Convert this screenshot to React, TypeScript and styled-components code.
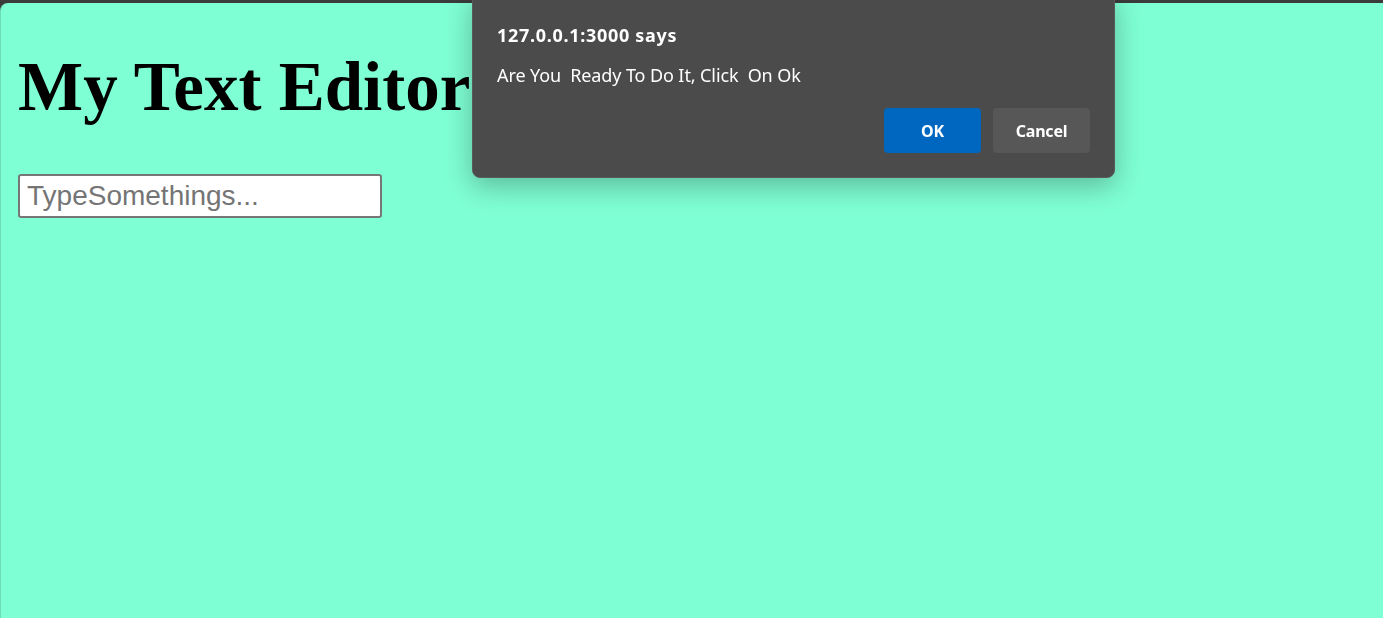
import React from "react";
import styled, { createGlobalStyle } from "styled-components";

const Global = createGlobalStyle`
  html, body { margin: 0; padding: 0; background: #3b3b3b; }
  body { height: 618px; overflow: hidden; }
`;

const Viewport = styled.div`
  margin-top: 3px;
  height: 615px;
  box-sizing: border-box;
  background: #7fffd4;
  border-top-left-radius: 8px;
  border-left: 1px solid #6cdcb6;
  padding: 0 0 0 17px;
  overflow: hidden;
`;

const Title = styled.h1`
  margin: 47px 0 49px;
  font-family: "Liberation Serif", "Times New Roman", serif;
  font-weight: bold;
  font-size: 69px;
  line-height: 75px;
  color: #000;
`;

const TextInput = styled.input`
  display: block;
  box-sizing: border-box;
  width: 364px;
  height: 44px;
  margin: 0;
  padding: 2px 7px;
  border: 2px solid #767676;
  border-radius: 3px;
  background: #fff;
  font-family: "Liberation Sans", Arial, sans-serif;
  font-size: 28px;
  color: #000;
  outline: none;
  &::placeholder { color: #757575; }
`;

const Dialog = styled.div`
  position: fixed;
  left: 472px;
  top: -8px;
  width: 643px;
  height: 186px;
  box-sizing: border-box;
  padding: 31px 24px 0 24px;
  background: #4b4b4b;
  border: 1px solid #5a5a5a;
  border-radius: 8px;
  box-shadow: 0 8px 28px rgba(0, 0, 0, 0.28);
  font-family: "Noto Sans", "Open Sans", sans-serif;
  color: #fff;
  display: flex;
  flex-direction: column;
`;

const DialogTitle = styled.div`
  font-weight: bold;
  font-size: 18px;
  line-height: 22px;
  letter-spacing: 0.7px;
`;

const DialogMessage = styled.div`
  margin-top: 18px;
  font-size: 18px;
  line-height: 22px;
  white-space: pre;
  letter-spacing: -0.1px;
`;

const Actions = styled.div`
  margin-top: 22px;
  display: flex;
  justify-content: flex-end;
  gap: 12px;
`;

const Button = styled.button<{ $primary?: boolean }>`
  width: 97px;
  height: 45px;
  border: none;
  border-radius: 4px;
  background: ${(p) => (p.$primary ? "#0067c0" : "#575757")};
  color: #fff;
  font-family: "Noto Sans", "Open Sans", sans-serif;
  font-weight: bold;
  font-size: 16px;
  letter-spacing: -0.2px;
  cursor: pointer;
`;

export default function App() {
  return (
    <>
      <Global />
      <Viewport>
        <Title>My Text Editor</Title>
        <TextInput placeholder="TypeSomethings..." />
      </Viewport>
      <Dialog role="alertdialog">
        <DialogTitle>127.0.0.1:3000 says</DialogTitle>
        <DialogMessage>{"Are You  Ready To Do It, Click  On Ok"}</DialogMessage>
        <Actions>
          <Button $primary>OK</Button>
          <Button>Cancel</Button>
        </Actions>
      </Dialog>
    </>
  );
}
